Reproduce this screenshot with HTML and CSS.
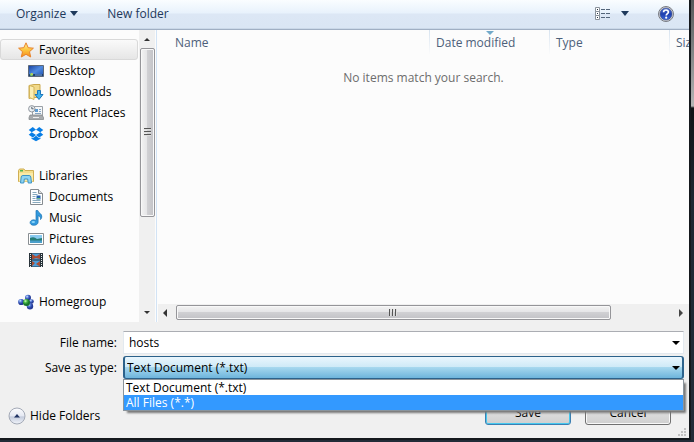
FILE: index.html
```html
<!DOCTYPE html>
<html lang="en">
<head>
<meta charset="utf-8">
<title>Save As</title>
<link rel="stylesheet" href="styles.css">
</head>
<body>
<main class="dialog">
  <div class="toolbar">
    <button class="tool" type="button">Organize <svg class="caret" width="8" height="5" viewBox="0 0 8 5"><path d="M0 0h8L4 5z" fill="#1e395b"/></svg></button>
    <button class="tool" type="button">New folder</button>
    <button class="tool views" type="button" aria-label="Change view">
      <svg width="15" height="14" viewBox="0 0 15 14"><g fill="#fff" stroke="#8a939c"><path d="M.5.5h4v4h-4zM.5 4.500h4v4h-4zM.5 8.500h4v4h-4z"/></g><path d="M2 2h1v1H2zM2 6h1v1H2zM2 10h1v1H2z" fill="#234"/><path d="M6 2.500h4m1 0h4M6 6.500h4m1 0h4M6 10.500h4m1 0h4" stroke="#53657a"/></svg>
      <svg class="caret" width="8" height="5" viewBox="0 0 8 5"><path d="M0 0h8L4 5z" fill="#1e395b"/></svg>
    </button>
    <button class="tool help" type="button" aria-label="Help">
      <svg width="16" height="16" viewBox="0 0 16 16"><defs><linearGradient id="hg" x2="0" y2="1"><stop stop-color="#5577d2"/><stop offset=".5" stop-color="#1e3fae"/><stop offset="1" stop-color="#3c68d8"/></linearGradient></defs><circle cx="8" cy="8" r="7.500" fill="#d8d8d8" stroke="#777b83"/><circle cx="8" cy="8" r="6" fill="url(#hg)" stroke="#3b4c86" stroke-width=".6"/><path d="M5.600 6.300C5.600 3.200 10.600 3.300 10.400 6.200 10.300 7.700 8.200 7.600 8.200 9.600" fill="none" stroke="#fff" stroke-width="1.700"/><circle cx="8.200" cy="11.700" r="1.100" fill="#fff"/></svg>
    </button>
  </div>

  <div class="browser">
    <nav class="tree">
      <ul class="group">
        <li class="root selected"><svg width="16" height="16" viewBox="0 0 16 16"><defs><linearGradient id="st" x2="0" y2="1"><stop stop-color="#fff0a0"/><stop offset=".5" stop-color="#fdc63d"/><stop offset="1" stop-color="#f58a1c"/></linearGradient></defs><path d="M8 .8l2.200 4.900 5.200.5-3.900 3.500 1.200 5.300L8 12.300 3.300 15l1.200-5.300L.6 6.200l5.200-.5z" fill="url(#st)" stroke="#e8832a"/></svg>Favorites</li>
        <li><svg width="16" height="16" viewBox="0 0 16 16"><defs><linearGradient id="dk" x2="1" y2="1"><stop stop-color="#173f9d"/><stop offset=".5" stop-color="#4f8ae0"/><stop offset="1" stop-color="#1d4fae"/></linearGradient></defs><path d="M.5 2.500h15v11H.5z" fill="url(#dk)" stroke="#5c6878"/><path d="M1 11h14v2H1z" fill="#1b3d72"/><path d="M7 11.500h7v1H7z" fill="#7faade"/><circle cx="3.500" cy="11.500" r="1.600" fill="#7fd06a"/><path d="M3.500 11.500V10a1.500 1.500 0 0 1 1.500 1.500z" fill="#ffcf3a"/></svg>Desktop</li>
        <li><svg width="16" height="16" viewBox="0 0 16 16"><path d="M1 1.500 6 .5h6v13H4l-3 1z" fill="#f1d98a" stroke="#cba84c"/><path d="M1.500 1.500 6 3v12.500l-4.500-2z" fill="#fbeeb4" stroke="#d4b55a"/><path d="M9.500 6.500h3v4H15l-4 5-4-5h2.500z" fill="#43b3ee" stroke="#1a77bd"/></svg>Downloads</li>
        <li><svg width="16" height="16" viewBox="0 0 16 16"><path d="M4.500 1.500h10v9h-10z" fill="#f5f7f9" stroke="#9aa0a6"/><path d="M7 4h3v3H7z" fill="#5c9bd2"/><path d="M11 4.500h2m-2 2h2M7 8.500h6" stroke="#85a5c2"/><path d="M2 10h12l1.500 2.500v2H1v-2z" fill="#a8abae" stroke="#7e8285" stroke-width=".7"/><path d="M5 12.500h6" stroke="#eee"/><circle cx="3.800" cy="3.800" r="3.200" fill="#eef2f5" stroke="#90969d"/><path d="M3.800 1.800v2h1.800" fill="none" stroke="#56616b"/></svg>Recent Places</li>
        <li><svg width="16" height="16" viewBox="0 0 16 16"><g fill="#087ee5"><path d="M4.800 1 8 3.700 3.700 6.300.7 4zM11.200 1 8 3.700l4.300 2.600 3-2.300zM3.700 6.300.7 8.800 4.800 11.500 8 8.900zM12.300 6.300l3 2.500-4.100 2.700L8 8.900zM8 9.800l3.200 2.500 1.300-.8v1.200L8 15.300l-4.500-2.600v-1.200l1.300.8z"/></g></svg>Dropbox</li>
      </ul>
      <ul class="group">
        <li class="root"><svg width="16" height="16" viewBox="0 0 16 16"><path d="M.5 2.500 1.500 1H6l1 1.500h8.500v11H.5z" fill="#f5df8d" stroke="#cfae53"/><path d="M2 2h3v1.500H2z" fill="#53b653"/><path d="M1 5h14v8.500H1z" fill="#fbeba8"/><path d="M2.500 15l.7-6q.2-1.500 1.700-1.500h6.200q1.500 0 1.700 1.500l.7 6h-3.300l-.5-4H6.300l-.5 4z" fill="#8ed4f3" stroke="#3c94c6"/></svg>Libraries</li>
        <li><svg width="16" height="16" viewBox="0 0 16 16"><path d="M2.500.5h8l4 4v11h-12z" fill="#fff" stroke="#858b90"/><path d="M10.500.5v4h4" fill="#ddd" stroke="#858b90"/><path d="M4.500 3.500h4m-4 2h5m-5 2h3m-3 2h3m-3 2h8m-8 2h8" stroke="#88a9bd"/><path d="M8.500 6.500h4v4h-4z" fill="#2563ac"/><path d="M9 9h3v1H9z" fill="#71bd83"/></svg>Documents</li>
        <li><svg width="16" height="16" viewBox="0 0 16 16"><path d="M8 .5h1.800c.3 2.500 4.500 3 4 6.500-.2 1.200-.6 2-1.300 2.600.5-2.400-.7-3.300-2.400-3.900v6.500c0 4-8 4-8 .5 0-2.700 3.700-3.600 5.900-2.200z" fill="#3299dd" stroke="#1c75b4" stroke-width=".7"/><ellipse cx="5.300" cy="12" rx="1.800" ry="1" fill="#8cd6fa"/></svg>Music</li>
        <li><svg width="16" height="16" viewBox="0 0 16 16"><path d="M.5 2.500h15v11H.5z" fill="#fff" stroke="#898e92"/><path d="M2 4h12v4H2z" fill="#8acaf0"/><path d="M2 7q4-2 7 1l5-1v3H2z" fill="#257c77"/><path d="M2 9.500h12V12H2z" fill="#4b9fca"/></svg>Pictures</li>
        <li><svg width="16" height="16" viewBox="0 0 16 16"><path d="M1 1h14v14H1z" fill="#29333a"/><path d="M4 1.500h8v6H4zM4 8.500h8v6H4z" fill="#4d9edb"/><path d="M4 2l4 2.500L12 2v5L8 6 4 7.500zM4 9l3 2-3 3zM12 9l-4 3 4 2.500z" fill="#aa4c34"/><path d="M2.500 2v13m11-13v13" stroke="#e5edf0" stroke-dasharray="1 1"/></svg>Videos</li>
      </ul>
      <ul class="group">
        <li class="root"><svg width="16" height="16" viewBox="0 0 16 16"><defs><radialGradient id="bl" cx=".35" cy=".3"><stop stop-color="#d3e5ff"/><stop offset=".5" stop-color="#5076d3"/><stop offset="1" stop-color="#263c98"/></radialGradient><radialGradient id="gn" cx=".35" cy=".3"><stop stop-color="#ceffb7"/><stop offset=".5" stop-color="#45b644"/><stop offset="1" stop-color="#18752a"/></radialGradient></defs><g fill="url(#bl)"><circle cx="10" cy="3.800" r="3"/><circle cx="3.200" cy="8" r="3.100"/><circle cx="13.500" cy="7.500" r="2.300"/><circle cx="12" cy="12.300" r="3.200"/></g><circle cx="8.500" cy="8.500" r="3.500" fill="url(#gn)"/></svg>Homegroup</li>
      </ul>
    </nav>
    <div class="vscroll">
      <svg width="8" height="5" viewBox="0 0 8 5"><path d="M1 4h6L4 1z" fill="#333"/></svg>
      <div class="vthumb"><i></i><i></i><i></i></div>
      <div class="vspace"></div>
      <svg width="8" height="5" viewBox="0 0 8 5"><path d="M1 1h6L4 4z" fill="#333"/></svg>
    </div>
    <section class="files">
      <div class="columns">
        <span>Name</span>
        <span class="sorted">Date modified<svg class="sort" width="8" height="4" viewBox="0 0 8 4"><path d="M0 0h8L4 4z" fill="#72a9c9"/></svg></span>
        <span>Type</span>
        <span>Size</span>
      </div>
      <p class="empty">No items match your search.</p>
      <div class="hscroll">
        <svg width="5" height="8" viewBox="0 0 5 8"><path d="M4 0v8L0 4z" fill="#333"/></svg>
        <div class="htrack"><div class="hthumb"><i></i><i></i><i></i></div></div>
        <svg width="5" height="8" viewBox="0 0 5 8"><path d="M1 0v8l4-4z" fill="#444"/></svg>
      </div>
    </section>
  </div>

  <form class="footer">
    <div class="field">
      <label for="name">File name:</label>
      <div class="box"><input id="name" type="text" value="hosts"><svg class="drop" width="8" height="4" viewBox="0 0 8 4"><path d="M0 0h8L4 4z"/></svg></div>
    </div>
    <div class="field">
      <label for="type">Save as type:</label>
      <div class="box">
        <select id="type"><option>Text Document (*.txt)</option><option>All Files (*.*)</option></select><svg class="drop" width="8" height="4" viewBox="0 0 8 4"><path d="M0 0h8L4 4z"/></svg>
        <ul class="options" role="listbox" aria-label="Save as type">
          <li role="option">Text Document (*.txt)</li>
          <li role="option" aria-selected="true">All Files (*.*)</li>
        </ul>
      </div>
    </div>
    <div class="actions">
      <button class="hide" type="button"><svg width="18" height="18" viewBox="0 0 18 18"><defs><linearGradient id="hf" x2="0" y2="1"><stop stop-color="#fdfdff"/><stop offset=".5" stop-color="#e4e8f2"/><stop offset=".55" stop-color="#c3cbdc"/><stop offset="1" stop-color="#f2f5fb"/></linearGradient></defs><circle cx="9" cy="9" r="8" fill="url(#hf)" stroke="#a3a9b6"/><path d="M6 10.500h6L9 7z" fill="#1f3263"/></svg>Hide Folders</button>
      <button class="push primary" type="button">Save</button>
      <button class="push" type="button">Cancel</button>
    </div>
    <svg class="grip" width="8" height="8" viewBox="0 0 8 8"><path d="M6 0h2v2H6zM3 3h2v2H3zM6 3h2v2H6zM0 6h2v2H0zM3 6h2v2H3zM6 6h2v2H6z" fill="#c2c2c2"/></svg>
  </form>
</main>
</body>
</html>
```

FILE: styles.css
```css
* { box-sizing: border-box; }

body {
  margin: 0;
  height: 100vh;
  padding: 0 3px 2px 0;
  background: linear-gradient(#55585a, #77797b 40px, #b5b5b5 106px, #101316 108px, #1e2732 200px, #232c38);
  font: 12px/16px "Open Sans", "Noto Sans", sans-serif;
  color: #000;
  overflow: hidden;
}

ul { list-style: none; margin: 0; padding: 0; }
button, input, select { font: inherit; color: inherit; }
svg { display: block; flex: none; }

.dialog {
  height: 100%;
  display: flex;
  flex-direction: column;
  background: #f0f0f0;
  border: solid #15191d;
  border-width: 0 2px 2px 0;
}

/* Toolbar */
.toolbar {
  flex: none;
  height: 30px;
  display: flex;
  align-items: center;
  gap: 29px;
  padding: 0 15px 2px 16px;
  background: linear-gradient(#fafdff, #e8f2fc 13px, #dce7f5 14px, #dae6f4 27px);
  border-bottom: 1px solid #a0afc3;
  box-shadow: inset 0 -1px #cad8e8;
}
.tool {
  display: flex;
  align-items: center;
  gap: 4px;
  padding: 0;
  border: 0;
  background: none;
  color: #1e395b;
}
.views { margin-left: auto; gap: 11px; }

/* Navigation tree */
.browser { flex: 1; min-height: 0; display: flex; background: #fcfcfc; }
.tree { flex: none; width: 139px; padding-top: 9px; }
.group { margin-bottom: 21px; }
.group:last-child { margin-bottom: 0; }
.tree li {
  height: 21px;
  display: flex;
  align-items: center;
  gap: 5px;
  padding-left: 28px;
  white-space: nowrap;
}
.tree .root { padding-left: 18px; }
.tree .selected {
  width: 138px;
  padding-left: 17px;
  border: 1px solid #d9d9d9;
  border-radius: 3px;
  background: linear-gradient(#fafafa, #e6e6e6);
}

/* Scroll bars */
.vscroll {
  flex: none;
  width: 16px;
  display: flex;
  flex-direction: column;
  align-items: center;
  padding: 7px 0 7px;
  gap: 6px;
  background: #f0f0f0;
}
.vthumb, .hthumb {
  display: flex;
  align-items: center;
  justify-content: center;
  gap: 1px;
  border: 1px solid #959599;
  border-radius: 2px;
  box-shadow: inset 0 0 0 1px #f8f8f8;
}
.vthumb {
  flex: 169;
  width: 15px;
  flex-direction: column;
  background: linear-gradient(90deg, #f3f3f3, #e4e4e6 50%, #d0d0d3 50%, #c2c2c6);
}
.vspace { flex: 82; }
.vthumb i { width: 7px; height: 2px; background: #555; border-bottom: 1px solid #ddd; }
.hscroll {
  height: 18px;
  display: flex;
  align-items: center;
  gap: 8px;
  padding: 0 6px 1px 5px;
  background: #f0f0f0;
}
.htrack { flex: 1; }
.hthumb {
  width: 88%;
  height: 15px;
  background: linear-gradient(#f3f3f3, #e4e4e6 50%, #d0d0d3 50%, #c2c2c6);
}
.hthumb i { width: 2px; height: 7px; background: #555; border-right: 1px solid #ddd; }

/* File list */
.files {
  flex: 1;
  min-width: 0;
  display: flex;
  flex-direction: column;
  border-left: 1px solid #d2e3f5;
  margin-left: 1px;
  padding-left: 1px;
}
.columns {
  display: grid;
  grid-template-columns: 1fr 120px 120px 20px;
  overflow: hidden;
  color: #4c607a;
}
.columns span {
  position: relative;
  height: 24px;
  padding: 5px 0 0 6px;
  border-left: 1px solid;
  border-image: linear-gradient(#d5e2ef, #fcfcfc) 1;
  white-space: nowrap;
}
.columns span:first-child { border: 0; padding-left: 17px; }
.sort { position: absolute; top: 1px; left: 56px; }
.empty {
  flex: 1;
  margin: 0;
  padding-top: 16px;
  text-align: center;
  color: #6d6d6d;
}

/* Name, type and actions */
.footer {
  flex: none;
  position: relative;
  padding: 9px 5px 13px 0;
  display: flex;
  flex-direction: column;
  gap: 2px;
}
.field { display: flex; align-items: center; }
.field label { width: 123px; padding-right: 6px; text-align: right; }
.box { flex: 1; position: relative; }
.box input, .box select {
  display: block;
  width: 100%;
  height: 23px;
  margin: 0;
  padding: 0 5px;
  border: 1px solid #e3e9ef;
  border-top-color: #abadb3;
  border-radius: 0;
  background: #fff;
  outline: 0;
}
.box select {
  appearance: none;
  padding: 0 2px;
  border: 2px solid #2c628b;
  border-width: 1px 2px;
  border-radius: 3px;
  background: linear-gradient(#eaf6fd, #cde9f7 50%, #a6d7ee 50%, #6eb5dc);
}
.drop { position: absolute; right: 4px; top: 10px; }
.options {
  position: absolute;
  z-index: 1;
  top: 23px;
  left: 0;
  right: 0;
  border: 1px solid #8a949c;
  background: #fff;
  box-shadow: 3px 3px 2px -1px #777;
}
.options li { padding: 0 2px; line-height: 15px; }
.options [aria-selected] { background: #39f; color: #fff; }
.actions {
  display: flex;
  align-items: flex-end;
  gap: 14px;
  padding: 20px 13px 0 8px;
}
.hide {
  display: flex;
  align-items: center;
  gap: 4px;
  margin-right: auto;
  padding: 0;
  border: 0;
  background: none;
}
.push {
  width: 86px;
  height: 24px;
  padding: 0;
  border: 1px solid #707070;
  border-radius: 3px;
  background: linear-gradient(#f2f2f2, #ebebeb 50%, #ddd 50%, #cfcfcf);
  box-shadow: inset 0 0 0 1px #f8f8f8;
}
.primary { border-color: #3c7fb1; box-shadow: inset 0 0 0 1px #45c8ef; }
.grip { position: absolute; right: 3px; bottom: 2px; }
```
